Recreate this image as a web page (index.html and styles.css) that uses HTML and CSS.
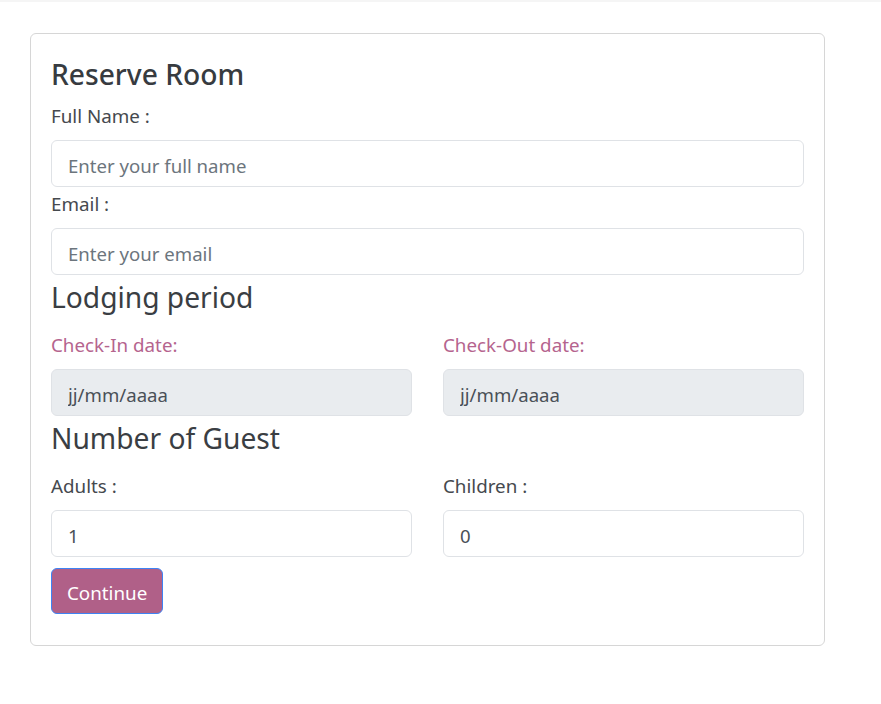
FILE: index.html
```html
<!DOCTYPE html>
<html lang="en">
<head>
<meta charset="utf-8">
<title>Reserve Room</title>
<link rel="stylesheet" href="styles.css">
</head>
<body>
<div class="topline"></div>
<main class="page">
  <form class="card">
    <h3 class="title">Reserve Room</h3>
    <div class="group">
      <label class="label" for="name">Full Name :</label>
      <input class="field" id="name" type="text" placeholder="Enter your full name">
    </div>
    <div class="group">
      <label class="label" for="email">Email :</label>
      <input class="field" id="email" type="email" placeholder="Enter your email">
    </div>
    <h4 class="section">Lodging period</h4>
    <div class="row">
      <div class="col">
        <label class="label label-accent" for="in">Check-In date:</label>
        <input class="field field-disabled" id="in" type="text" value="jj/mm/aaaa" readonly>
      </div>
      <div class="col">
        <label class="label label-accent" for="out">Check-Out date:</label>
        <input class="field field-disabled" id="out" type="text" value="jj/mm/aaaa" readonly>
      </div>
    </div>
    <h4 class="section">Number of Guest</h4>
    <div class="row">
      <div class="col">
        <label class="label label-guest" for="adults">Adults :</label>
        <input class="field" id="adults" type="number" value="1">
      </div>
      <div class="col">
        <label class="label label-guest" for="children">Children :</label>
        <input class="field" id="children" type="number" value="0">
      </div>
    </div>
    <button class="btn" type="button">Continue</button>
  </form>
</main>
</body>
</html>
```
FILE: styles.css
```css
* { box-sizing: border-box; }
html, body { margin: 0; padding: 0; background: #fff; }
body {
  font-family: "Noto Sans", "Open Sans", sans-serif;
  color: #3c4146;
}
.topline {
  height: 2px;
  background: #f5f5f5;
}
.page {
  padding: 31px 0 0 30px;
}
.card {
  width: 795px;
  height: 613px;
  border: 1px solid #d6d6d6;
  border-radius: 6px;
  padding: 20px 20px 0 20px;
  display: flex;
  flex-direction: column;
}
.title {
  margin: 4px 0 13px 0;
  font-size: 28.2px;
  line-height: 32px;
  font-weight: 500;
  color: #373b40;
}
.group + .group { margin-top: 4.5px; }
.label {
  display: block;
  font-size: 18.8px;
  line-height: 26px;
  margin-bottom: 10.5px;
  color: #45494e;
}
.label-accent { color: #b5648e; margin-top: 17px; }
.label-guest { margin-top: 17px; }
.field {
  display: block;
  width: 100%;
  height: 47px;
  padding: 4px 16px 0 16px;
  font-family: inherit;
  font-size: 18.6px;
  color: #495057;
  background: #fff;
  border: 1px solid #dfe2e6;
  border-radius: 6px;
  outline: none;
  -moz-appearance: textfield;
}
.field::placeholder { color: #6c757d; }
.field::-webkit-outer-spin-button,
.field::-webkit-inner-spin-button { -webkit-appearance: none; margin: 0; }
.field-disabled {
  background: #e9ecef;
  color: #495057;
}
.section {
  margin: 4.5px 0 0 0;
  font-size: 28.2px;
  line-height: 36px;
  font-weight: 400;
  color: #3a3e43;
}
.row {
  display: grid;
  grid-template-columns: 1fr 1fr;
  column-gap: 31px;
}
.btn {
  align-self: flex-start;
  margin-top: 11px;
  height: 46px;
  padding: 4px 15px 0 15px;
  font-family: inherit;
  font-size: 18.8px;
  color: #fff;
  background: #b06088;
  border: 1px solid #3e83f4;
  border-radius: 6px;
}
```
